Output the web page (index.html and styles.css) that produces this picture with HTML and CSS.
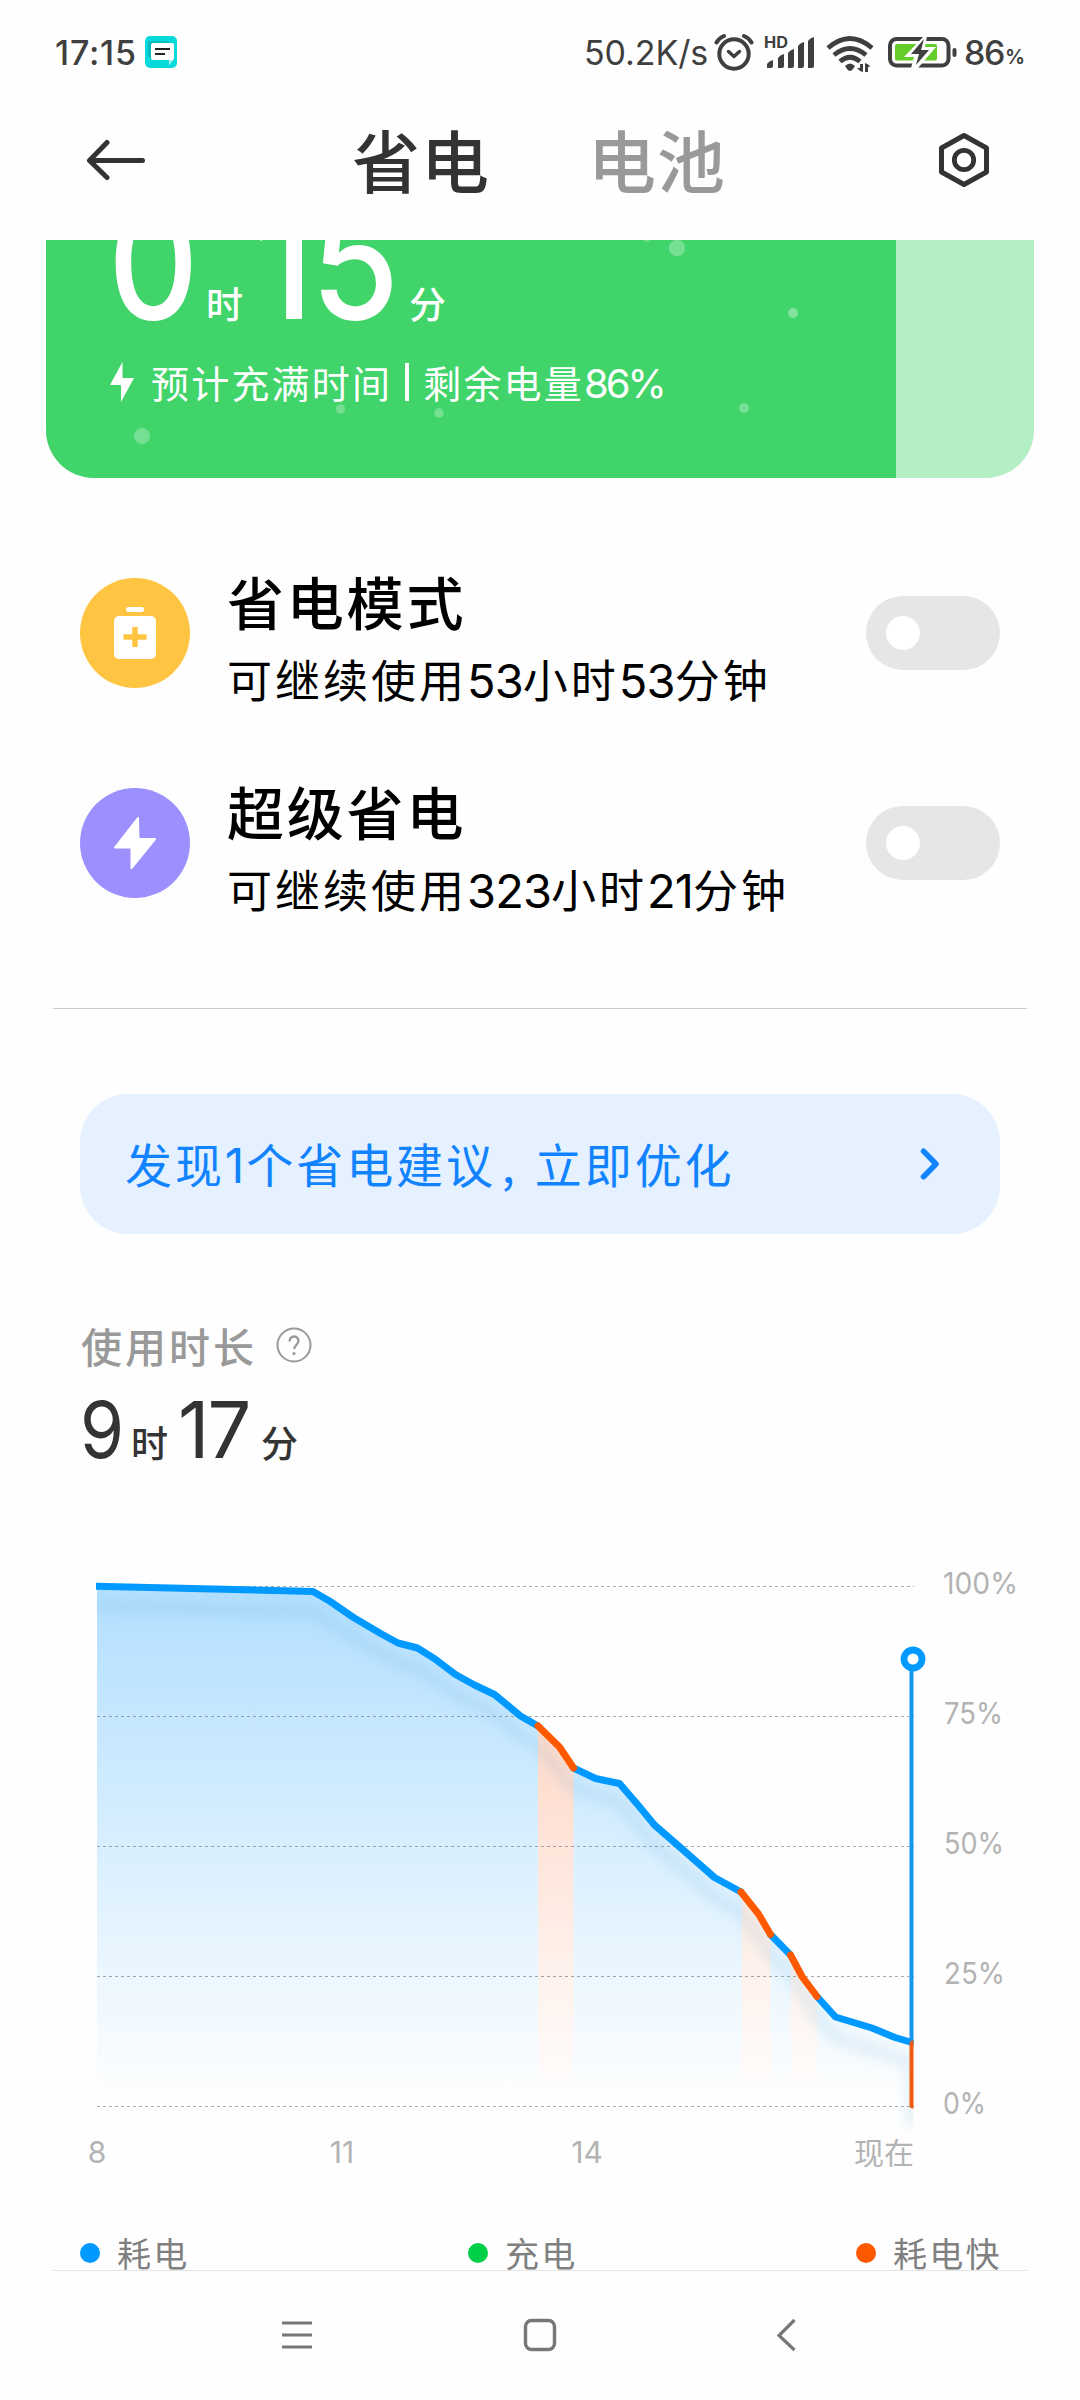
FILE: index.html
```html
<!DOCTYPE html>
<html lang="zh-CN">
<head>
<meta charset="utf-8">
<title>省电</title>
<link rel="stylesheet" href="styles.css">
</head>
<body>
<div class="status">
  <span class="clock">17:15</span>
  <svg class="msg" width="32" height="32" viewBox="0 0 32 32"><rect width="32" height="32" rx="5" fill="#08dadb"/><rect x="3" y="5" width="22" height="17" rx="3" fill="#08babd"/><path d="M8 7h19a2 2 0 0 1 2 2v13a2 2 0 0 1-1 2l-4 5v-5H8a2 2 0 0 1-2-2V9a2 2 0 0 1 2-2z" fill="#fff"/><path d="M24 24h4l-4 5z" fill="#a5f1f1"/><path d="M10 13h15M10 18h10" stroke="#222" stroke-width="2"/></svg>
  <span class="speed">50.2K/s</span>
  <svg class="alarm" width="40" height="38" viewBox="0 0 40 38"><circle cx="20" cy="21" r="14.7" fill="none" stroke="#3f3f3f" stroke-width="4"/><path d="M14.500 18.500l5.500 5 5.500-5" fill="none" stroke="#3f3f3f" stroke-width="3.500" stroke-linecap="round" stroke-linejoin="round"/><path d="M2.500 9.500Q5 5 10 3M37.500 9.500Q35 5 30 3" fill="none" stroke="#3f3f3f" stroke-width="4" stroke-linecap="round"/></svg>
  <svg class="signal" width="52" height="34" viewBox="0 0 52 34"><text class="hd" x="0" y="13" textLength="24" lengthAdjust="spacingAndGlyphs">HD</text><path d="M3 33v-4q2-3 6-4v6q0 2-2 2zM14 33v-10q2-3 6-4v12q0 2-2 2zM24 33v-15q2-3 6-4v17q0 2-2 2zM34 33v-22q2-3 6-4v24q0 2-2 2zM44 33V6q2-3 6-4v29q0 2-2 2z" fill="#3f3f3f"/></svg>
  <svg class="wifi" width="48" height="38" viewBox="0 0 48 38"><g fill="none" stroke="#3f3f3f" stroke-width="4.800"><path d="M2 13Q24-6 46 13"/><path d="M8 20Q24 7 40 20"/><path d="M14 26.500Q24 18 34 26.500"/></g><path d="M19 31q5-5 10 0l-2 3q-3 4-6 0zM37 29v8q-4-1-6-4h3v-4zM39 37v-9q4 1 5 4h-2v5z" fill="#3f3f3f"/></svg>
  <svg class="batt" width="70" height="32" viewBox="0 0 70 32"><rect x="2" y="3" width="58.500" height="26.500" rx="6.500" fill="none" stroke="#3f3f3f" stroke-width="4"/><rect x="7" y="8" width="42" height="16.500" rx="2" fill="#64cc2b"/><path d="M36 0L16 21h10L23 32h7L48 11H37L39 0z" fill="#fff"/><path d="M36 3L23 18h8L28 29 41 14H33z" fill="#3f3f3f"/><rect x="64.500" y="12" width="4" height="9" rx="2" fill="#3f3f3f"/></svg>
  <span class="level">86</span><span class="pct">%</span>
</div>
<header class="header">
  <svg class="back" width="60" height="44" viewBox="0 0 60 44"><path d="M56.500 22.500H4M21 4.500L3.500 22.500 21 39.500" fill="none" stroke="#333" stroke-width="5" stroke-linecap="round" stroke-linejoin="round"/></svg>
  <nav class="tabs"><span class="tab active">省电</span><span class="tab">电池</span></nav>
  <svg class="gear" width="56" height="60" viewBox="0 0 56 60"><path d="M28 5.500L50.500 18V42L28 54.500 5.500 42V18z" fill="none" stroke="#333" stroke-width="5" stroke-linejoin="round"/><circle cx="28" cy="30" r="9.700" fill="none" stroke="#333" stroke-width="4.800"/></svg>
</header>
<main class="content">
  <section class="card">
    <div class="fill"></div>
    <svg class="bubbles" width="988" height="238" viewBox="0 0 988 238" fill="#fff" fill-opacity=".28"><circle cx="96" cy="196" r="8"/><circle cx="294.500" cy="169" r="4.700"/><circle cx="393" cy="173" r="4.700"/><circle cx="631" cy="8" r="8.200"/><circle cx="747" cy="73" r="5" fill-opacity=".35"/><circle cx="698" cy="168" r="5"/><circle cx="601" cy="-2" r="3.500"/></svg>
    <div class="eta"><span class="num">0</span><span class="unit">时</span><span class="num n15">15</span><span class="unit">分</span></div>
    <div class="note"><svg width="26" height="42" viewBox="0 0 26 42"><path d="M13.500 1L1 24h11v17L25 17H13.500z" fill="#fff"/></svg><span>预计充满时间</span><i></i><span>剩余电量<b>86%</b></span></div>
  </section>

  <section class="modes">
    <div class="mode">
      <svg class="disc" width="110" height="110" viewBox="0 0 110 110"><circle cx="55" cy="55" r="55" fill="#ffc542"/><rect x="46" y="29" width="18" height="5" rx="2.500" fill="#fff"/><rect x="34" y="38" width="42" height="43" rx="5" fill="#fff"/><path d="M55 49v20M43.500 59h23" stroke="#ffc542" stroke-width="5.500"/></svg>
      <div class="text"><h2>省电模式</h2><p>可继续使用<b>53</b>小时<b>53</b>分钟</p></div>
      <div class="toggle"></div>
    </div>
    <div class="mode">
      <svg class="disc" width="110" height="110" viewBox="0 0 110 110"><circle cx="55" cy="55" r="55" fill="#9c90ff"/><path d="M58 30L35 59.500H51.500V80L75 51H58.500z" fill="#fff" stroke="#fff" stroke-width="2" stroke-linejoin="round"/></svg>
      <div class="text"><h2>超级省电</h2><p>可继续使用<b>323</b>小时<b>21</b>分钟</p></div>
      <div class="toggle"></div>
    </div>
  </section>

  <a class="tip"><span>发现<b>1</b>个省电建议<em>,</em>立即优化</span><svg width="24" height="34" viewBox="0 0 24 34"><path d="M5.500 4.200L18 17 5.500 29.700" fill="none" stroke="#1283ff" stroke-width="5.500" stroke-linecap="round" stroke-linejoin="round"/></svg></a>

  <section class="usage">
    <div class="label">使用时长<svg width="36" height="36" viewBox="0 0 36 36"><circle cx="18" cy="18" r="16.500" fill="none" stroke="#999" stroke-width="2"/><path d="M13.500 14.500q.5-5 4.500-5t4.500 4.500c0 3-4.300 4.500-4.300 8" fill="none" stroke="#999" stroke-width="2.300"/><circle cx="18" cy="26.500" r="1.600" fill="#999"/></svg></div>
    <div class="total"><span class="num">9</span><span class="unit">时</span><span class="num n17">17</span><span class="unit">分</span></div>
  </section>

  <svg class="chart" width="1080" height="660" viewBox="0 1540 1080 660">
    <defs>
      <linearGradient id="blue" gradientUnits="userSpaceOnUse" x1="0" y1="1586" x2="0" y2="2100"><stop offset="0" stop-color="#b2dfff"/><stop offset="1" stop-color="#fefefe"/></linearGradient>
      <linearGradient id="red" gradientUnits="userSpaceOnUse" x1="0" y1="1726" x2="0" y2="2100"><stop offset="0" stop-color="#ffd9c9"/><stop offset="1" stop-color="#fefefe"/></linearGradient>
      <filter id="soft" filterUnits="userSpaceOnUse" x="60" y="1560" width="900" height="620"><feGaussianBlur stdDeviation="6"/></filter>
      <clipPath id="plot"><rect x="96" y="1560" width="817.500" height="600"/></clipPath>
    </defs>
    <path fill="url(#blue)" d="M97 2106V1586L313 1591.500 329.500 1601 353.500 1617.500 381.500 1634 398 1643 417.500 1648 435 1659 455.500 1674.500 474.500 1685 494.500 1694.500 520.500 1716 538 1726 559.500 1747 573.500 1768 595.500 1778.500 619.500 1783.500 638 1805 654.500 1825 681.500 1848.500 714.500 1877.500 741 1892 758.500 1914 770.500 1934.500 790.500 1955 802 1976.500 817 1996.500 835.500 2017 872 2028 895 2037.500 912 2042.500V2106z"/>
    <g fill="url(#red)"><path d="M538 2106V1726L559.500 1747 573.500 1768V2106z"/><path d="M742 2106V1892L758.500 1914 770.500 1934.500V2106z"/><path d="M791 2106V1955L802 1976.500 817 1996.500V2106z"/></g>
    <g clip-path="url(#plot)"><path filter="url(#soft)" transform="translate(0 20)" fill="none" stroke="#4a9fcf" stroke-opacity=".15" stroke-width="12" d="M97 1586L313 1591.500 353.500 1617.500 398 1643 417.500 1648 455.500 1674.500 494.500 1694.500 520.500 1716 538 1726 573.500 1768 619.500 1783.500 654.500 1825 714.500 1877.500 741 1892 770.500 1934.500 790.500 1955 817 1996.500 835.500 2017 895 2037.500 912 2042.500V2106"/></g>
    <g stroke="#6f777d" stroke-opacity=".62" stroke-width="1" stroke-dasharray="3 3"><path d="M97 1586.500H914M97 1716.500H914M97 1846.500H914M97 1976.500H914M97 2106.500H914"/></g>
    <g clip-path="url(#plot)" fill="none" stroke-width="7" stroke-linejoin="round" stroke-linecap="round">
      <path stroke="#09f" d="M90 1586L313 1591.500 329.500 1601 353.500 1617.500 381.500 1634 398 1643 417.500 1648 435 1659 455.500 1674.500 474.500 1685 494.500 1694.500 520.500 1716 538 1726M573.500 1768L595.500 1778.500 619.500 1783.500 638 1805 654.500 1825 681.500 1848.500 714.500 1877.500 741 1892M770.500 1934.500L790.500 1955M817 1996.500L835.500 2017 872 2028 895 2037.500 912 2042.500"/>
      <path stroke="#ff5900" d="M538 1726L559.500 1747 573.500 1768M741 1892L758.500 1914 770.500 1934.500M790.500 1955L802 1976.500 817 1996.500"/>
      <path stroke="#1495ee" d="M913 1660V2042"/><path stroke="#f05b12" d="M913 2044V2105"/>
    </g>
    <circle cx="913" cy="1659" r="9" fill="#fff" stroke="#09f" stroke-width="6.800"/>
    <g class="axis"><text x="943" y="1594" textLength="75" lengthAdjust="spacingAndGlyphs">100%</text><text x="944" y="1724" textLength="59" lengthAdjust="spacingAndGlyphs">75%</text><text x="944" y="1854" textLength="60" lengthAdjust="spacingAndGlyphs">50%</text><text x="944" y="1984" textLength="61" lengthAdjust="spacingAndGlyphs">25%</text><text x="943" y="2114" textLength="43" lengthAdjust="spacingAndGlyphs">0%</text>
    <text x="97" y="2163" text-anchor="middle">8</text><text x="342" y="2163" text-anchor="middle">11</text><text x="587" y="2163" text-anchor="middle">14</text><text x="854" y="2164" textLength="60">现在</text></g>
  </svg>
  <div class="legend"><span class="key drain">耗电</span><span class="key charge">充电</span><span class="key fast">耗电快</span></div>
</main>
<footer class="navbar">
  <svg width="32" height="36" viewBox="0 0 32 36"><path d="M1 6h30M1 18h30M1 30h30" stroke="#777" stroke-width="3.200"/></svg>
  <svg width="36" height="36" viewBox="0 0 36 36"><rect x="3.500" y="3.500" width="29" height="29" rx="6" fill="none" stroke="#777" stroke-width="3.400"/></svg>
  <svg width="24" height="36" viewBox="0 0 24 36"><path d="M19.500 3L4 18.500 19.500 33" fill="none" stroke="#777" stroke-width="3.200"/></svg>
</footer>
</body>
</html>
```
FILE: styles.css
```css
* { box-sizing: border-box; margin: 0; padding: 0; }
body { width: 1080px; height: 2400px; overflow: hidden; background: #fefefe; color: #333; font-family: "Noto Sans CJK SC", sans-serif; display: flex; flex-direction: column; }
svg { display: block; flex: none; }
b { font-family: Inter, sans-serif; font-weight: 400; line-height: 1; }

.status { height: 104px; display: flex; align-items: flex-start; padding: 0 0 0 55px; color: #3f3f3f; font-size: 34px; line-height: 36px; font-weight: 500; font-family: Inter, sans-serif; white-space: nowrap; flex: none; }
.clock { width: 90px; margin-top: 35px; letter-spacing: .8px; }
.msg { margin-top: 36px; }
.speed { margin: 35px 0 0 407px; width: 130px; letter-spacing: -.1px; font-weight: 400; }
.alarm { margin-top: 33px; }
.signal { margin: 35px 0 0 10px; }
.hd { font: 700 16px Inter, sans-serif; fill: #3f3f3f; }
.wifi { margin: 35px 0 0 10px; }
.batt { margin: 36px 0 0 14px; }
.level { margin: 35px 0 0 6px; width: 41px; letter-spacing: -1.500px; }
.pct { margin-top: 41px; font-size: 20px; line-height: 32px; font-weight: 600; }

.header { height: 136px; display: flex; align-items: flex-start; flex: none; padding: 0 88px 0 86px; }
.back { margin-top: 34px; }
.tabs { flex: 1; display: flex; gap: 98px; margin-left: 206px; font-weight: 500; font-size: 68px; line-height: 96px; margin-top: 7px; }
.tab { color: #999; width: 138px; letter-spacing: 1px; white-space: nowrap; }
.active { color: #333; }
.gear { margin-top: 26px; }

.content { height: 2030px; overflow: hidden; flex: none; }
.card { position: relative; margin: 0 46px; height: 238px; border-radius: 0 0 48px 48px; background: #b3eec5; overflow: hidden; color: #fff; }
.fill { position: absolute; inset: 0 138px 0 0; background: #41d46a; }
.bubbles { position: absolute; inset: 0; }
.eta { position: relative; display: flex; height: 110px; margin-top: -32px; padding-left: 62px; align-items: baseline; line-height: 110px; font-size: 37px; }
.num { font-family: Inter, sans-serif; transform: scaleX(.9); transform-origin: left; }
.eta .num { font-size: 156px; width: 98px; font-weight: 500; }
.eta .n15 { width: 155px; margin-left: 10px; letter-spacing: -3px; transform: scaleX(.92); }
.eta .unit { width: 38px; font-weight: 500; }
.note { position: relative; display: flex; align-items: center; height: 50px; margin-top: 39px; padding-left: 63px; font-size: 38px; line-height: 50px; }
.note span { letter-spacing: 2.200px; white-space: nowrap; }
.note svg { margin-right: 16px; }
.note i { width: 4px; height: 38px; background: #fff; margin: 0 14px 0 13px; }
.note b { font-size: 40px; letter-spacing: -3px; }

.modes { margin: 0 53px; padding: 88px 27px 0; height: 531px; border-bottom: 1px solid #ccc; }
.mode { display: flex; height: 210px; color: #000; }
.disc { margin-top: 12px; }
.text { flex: 1; margin-left: 37px; margin-top: -4px; white-space: nowrap; }
.text h2 { font-weight: 500; font-size: 57px; line-height: 76px; letter-spacing: 2.800px; }
.text p { font-size: 45px; line-height: 60px; letter-spacing: 3px; margin-top: 11px; }
.text b { font-size: 47px; letter-spacing: -.9px; }
.toggle { width: 134px; height: 74px; border-radius: 37px; background: #e6e6e6; margin-top: 30px; padding: 20px; }
.toggle::before { content: ""; display: block; width: 34px; height: 34px; border-radius: 50%; background: #fff; }

.tip { margin: 85px 80px 0; height: 140px; border-radius: 48px; background: #e5f1ff; color: #1283ff; display: flex; align-items: center; justify-content: space-between; padding: 0 58px 0 45px; font-size: 47px; }
.tip span { letter-spacing: 2.900px; white-space: nowrap; margin-top: -4px; }
.tip b { font-size: 48px; letter-spacing: 2px; }
.tip em { font-style: normal; display: inline-block; width: 39px; padding-left: 6px; }

.usage { padding: 81px 0 0 81px; height: 306px; }
.label { display: flex; align-items: center; color: #999; font-size: 41px; line-height: 60px; letter-spacing: 3px; font-weight: 500; }
.label svg { margin-left: 19px; }
.total { display: flex; align-items: baseline; line-height: 90px; height: 90px; font-size: 37px; margin-top: 9px; }
.total .num { font-size: 79px; width: 51px; margin-left: -1px; }
.total .n17 { width: 83px; margin-left: 9px; letter-spacing: -2px; transform: scaleX(.98); }
.total .unit { width: 38px; font-weight: 500; }

.chart { width: 1080px; }
.axis { font-family: Inter, "Noto Sans CJK SC", sans-serif; font-size: 30px; fill: #b3b3b3; }
.legend { display: grid; grid-template-columns: 388px 388px auto; margin: 0 0 0 80px; padding-top: 28px; color: #808080; font-size: 34px; line-height: 50px; letter-spacing: 2.200px; }
.key { display: flex; align-items: center; gap: 17px; }
.key::before { content: ""; width: 20px; height: 20px; border-radius: 50%; background: #09f; }
.charge::before { background: #00d048; }
.fast::before { background: #ff5900; }

.navbar { margin: 0 52px; height: 130px; border-top: 1px solid #e5e5e5; display: flex; padding: 46px 0 0 229px; flex: none; }
.navbar svg:nth-child(2) { margin-left: 209px; }
.navbar svg:nth-child(3) { margin-left: 217px; }
```
